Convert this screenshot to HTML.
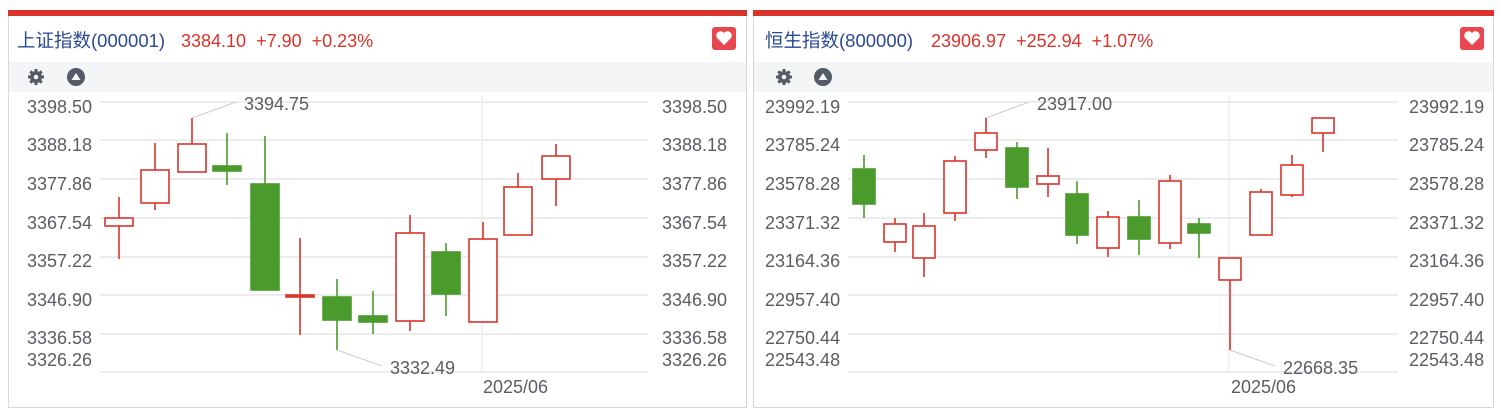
<!DOCTYPE html>
<html><head><meta charset="utf-8"><style>
html,body{margin:0;padding:0;background:#fff;width:1500px;height:415px;overflow:hidden}
svg text{font-family:"Liberation Sans","Noto Sans CJK SC",sans-serif}
</style></head><body>
<svg width="1500" height="415" viewBox="0 0 1500 415" xmlns="http://www.w3.org/2000/svg">
<!-- Panel 1 -->
<rect x="8.5" y="10.5" width="738" height="397" fill="#fff" stroke="#d8d8d8"/>
<rect x="8" y="10" width="739" height="6" fill="#d9342b"/>
<text x="17" y="47" font-size="18.5" fill="#2b4a93">上证指数(000001)</text>
<text x="181" y="47" font-size="18" fill="#d9342b">3384.10 &#160;+7.90 &#160;+0.23%</text>
<rect x="712" y="27" width="24" height="23" rx="3" fill="#e8474f"/>
<path d="M724 45 L717 38 A3.6 3.6 0 0 1 724 33 A3.6 3.6 0 0 1 731 38 Z" fill="#fff"/>
<rect x="9" y="62" width="737" height="30" fill="#f3f5f6"/>
<g fill="#545b66">
<circle cx="36" cy="77" r="6"/>
<g stroke="#545b66" stroke-width="3"><line x1="36" y1="69" x2="36" y2="85"/><line x1="28" y1="77" x2="44" y2="77"/><line x1="30.3" y1="71.3" x2="41.7" y2="82.7"/><line x1="41.7" y1="71.3" x2="30.3" y2="82.7"/></g>
<circle cx="36" cy="77" r="2.3" fill="#f3f5f6"/>
<circle cx="76" cy="77" r="9"/>
<path d="M71.5 80 L76 73 L80.5 80 Z" fill="#f3f5f6"/>
</g>
<rect x="9" y="92" width="88" height="280" fill="#fff"/>
<rect x="652" y="92" width="94" height="280" fill="#fff"/>
<g stroke="#e6e6e6" stroke-width="1.5">
<line x1="100" y1="102" x2="648" y2="102"/><line x1="100" y1="140" x2="648" y2="140"/><line x1="100" y1="179" x2="648" y2="179"/><line x1="100" y1="218" x2="648" y2="218"/><line x1="100" y1="257" x2="648" y2="257"/><line x1="100" y1="295" x2="648" y2="295"/><line x1="100" y1="334" x2="648" y2="334"/><line x1="100" y1="372" x2="648" y2="372"/>
<line x1="482" y1="95" x2="482" y2="372" stroke="#efefef"/>
</g>
<g font-size="18" fill="#5a5d63">
<text x="27" y="113">3398.50</text><text x="27" y="151">3388.18</text><text x="27" y="190">3377.86</text><text x="27" y="229">3367.54</text><text x="27" y="267">3357.22</text><text x="27" y="306">3346.90</text><text x="27" y="344">3336.58</text><text x="27" y="366">3326.26</text>
<text x="662" y="113">3398.50</text><text x="662" y="151">3388.18</text><text x="662" y="190">3377.86</text><text x="662" y="229">3367.54</text><text x="662" y="267">3357.22</text><text x="662" y="306">3346.90</text><text x="662" y="344">3336.58</text><text x="662" y="366">3326.26</text>
<text x="244" y="110">3394.75</text><text x="390" y="374">3332.49</text><text x="483" y="393">2025/06</text>
</g>
<g stroke="#ccc" stroke-width="1"><line x1="192" y1="118" x2="236" y2="102"/><line x1="337" y1="350" x2="382" y2="366"/></g>
<g stroke-width="1.6">
<g stroke="#d9342b" fill="#fff">
<line x1="119" y1="197" x2="119" y2="259"/><rect x="105" y="218" width="28" height="8"/>
<line x1="155" y1="143" x2="155" y2="210"/><rect x="141" y="170" width="28" height="33"/>
<line x1="192" y1="118" x2="192" y2="172"/><rect x="178" y="144" width="28" height="28"/>
<line x1="300" y1="238" x2="300" y2="335"/><rect x="286" y="295" width="28" height="2" fill="#d9342b"/>
<line x1="410" y1="215" x2="410" y2="331"/><rect x="396" y="233" width="28" height="88"/>
<line x1="483" y1="222" x2="483" y2="322"/><rect x="469" y="239" width="28" height="83"/>
<line x1="518" y1="173" x2="518" y2="235"/><rect x="504" y="187" width="28" height="48"/>
<line x1="556" y1="144" x2="556" y2="206"/><rect x="542" y="156" width="28" height="23"/>
</g>
<g stroke="#4a9a2c" fill="#4a9a2c">
<line x1="227" y1="133" x2="227" y2="185"/><rect x="213" y="166" width="28" height="5"/>
<line x1="265" y1="136" x2="265" y2="290"/><rect x="251" y="184" width="28" height="106"/>
<line x1="337" y1="279" x2="337" y2="350"/><rect x="323" y="297" width="28" height="23"/>
<line x1="373" y1="291" x2="373" y2="334"/><rect x="359" y="316" width="28" height="6"/>
<line x1="446" y1="243" x2="446" y2="316"/><rect x="432" y="252" width="28" height="42"/>
</g>
</g>

<!-- Panel 2 -->
<rect x="753.5" y="10.5" width="740" height="397" fill="#fff" stroke="#d8d8d8"/>
<rect x="753" y="10" width="741" height="6" fill="#d9342b"/>
<text x="765" y="47" font-size="18.5" fill="#2b4a93">恒生指数(800000)</text>
<text x="931" y="47" font-size="18" fill="#d9342b">23906.97 &#160;+252.94 &#160;+1.07%</text>
<rect x="1460" y="27" width="24" height="23" rx="3" fill="#e8474f"/>
<path d="M1472 45 L1465 38 A3.6 3.6 0 0 1 1472 33 A3.6 3.6 0 0 1 1479 38 Z" fill="#fff"/>
<rect x="754" y="62" width="739" height="30" fill="#f3f5f6"/>
<g fill="#545b66">
<circle cx="784" cy="77" r="6"/>
<g stroke="#545b66" stroke-width="3"><line x1="784" y1="69" x2="784" y2="85"/><line x1="776" y1="77" x2="792" y2="77"/><line x1="778.3" y1="71.3" x2="789.7" y2="82.7"/><line x1="789.7" y1="71.3" x2="778.3" y2="82.7"/></g>
<circle cx="784" cy="77" r="2.3" fill="#f3f5f6"/>
<circle cx="823" cy="77" r="9"/>
<path d="M818.5 80 L823 73 L827.5 80 Z" fill="#f3f5f6"/>
</g>
<rect x="754" y="92" width="94" height="280" fill="#fff"/>
<rect x="1400" y="92" width="93" height="280" fill="#fff"/>
<g stroke="#e6e6e6" stroke-width="1.5">
<line x1="848" y1="102" x2="1398" y2="102"/><line x1="848" y1="140" x2="1398" y2="140"/><line x1="848" y1="179" x2="1398" y2="179"/><line x1="848" y1="218" x2="1398" y2="218"/><line x1="848" y1="257" x2="1398" y2="257"/><line x1="848" y1="295" x2="1398" y2="295"/><line x1="848" y1="334" x2="1398" y2="334"/><line x1="848" y1="372" x2="1398" y2="372"/>
<line x1="1229" y1="95" x2="1229" y2="372" stroke="#efefef"/>
</g>
<g font-size="18" fill="#5a5d63">
<text x="765" y="113">23992.19</text><text x="765" y="151">23785.24</text><text x="765" y="190">23578.28</text><text x="765" y="229">23371.32</text><text x="765" y="267">23164.36</text><text x="765" y="306">22957.40</text><text x="765" y="344">22750.44</text><text x="765" y="366">22543.48</text>
<text x="1409" y="113">23992.19</text><text x="1409" y="151">23785.24</text><text x="1409" y="190">23578.28</text><text x="1409" y="229">23371.32</text><text x="1409" y="267">23164.36</text><text x="1409" y="306">22957.40</text><text x="1409" y="344">22750.44</text><text x="1409" y="366">22543.48</text>
<text x="1037" y="110">23917.00</text><text x="1283" y="374">22668.35</text><text x="1231" y="393">2025/06</text>
</g>
<g stroke="#ccc" stroke-width="1"><line x1="986" y1="118" x2="1029" y2="102"/><line x1="1230" y1="350" x2="1275" y2="366"/></g>
<g stroke-width="1.6">
<g stroke="#d9342b" fill="#fff">
<line x1="895" y1="218" x2="895" y2="252"/><rect x="884" y="224" width="22" height="18"/>
<line x1="924" y1="213" x2="924" y2="277"/><rect x="913" y="226" width="22" height="32"/>
<line x1="955" y1="156" x2="955" y2="221"/><rect x="944" y="161" width="22" height="52"/>
<line x1="986" y1="118" x2="986" y2="158"/><rect x="975" y="133" width="22" height="17"/>
<line x1="1048" y1="148" x2="1048" y2="197"/><rect x="1037" y="176" width="22" height="8"/>
<line x1="1108" y1="211" x2="1108" y2="257"/><rect x="1097" y="217" width="22" height="31"/>
<line x1="1170" y1="175" x2="1170" y2="249"/><rect x="1159" y="181" width="22" height="62"/>
<line x1="1230" y1="258" x2="1230" y2="350"/><rect x="1219" y="258" width="22" height="22"/>
<line x1="1261" y1="189" x2="1261" y2="235"/><rect x="1250" y="192" width="22" height="43"/>
<line x1="1292" y1="155" x2="1292" y2="197"/><rect x="1281" y="165" width="22" height="30"/>
<line x1="1323" y1="118" x2="1323" y2="152"/><rect x="1312" y="118" width="22" height="15"/>
</g>
<g stroke="#4a9a2c" fill="#4a9a2c">
<line x1="864" y1="155" x2="864" y2="218"/><rect x="853" y="169" width="22" height="35"/>
<line x1="1017" y1="142" x2="1017" y2="199"/><rect x="1006" y="148" width="22" height="39"/>
<line x1="1077" y1="181" x2="1077" y2="244"/><rect x="1066" y="194" width="22" height="41"/>
<line x1="1139" y1="200" x2="1139" y2="255"/><rect x="1128" y="217" width="22" height="22"/>
<line x1="1199" y1="218" x2="1199" y2="258"/><rect x="1188" y="224" width="22" height="9"/>
</g>
</g>
</svg>
</body></html>
